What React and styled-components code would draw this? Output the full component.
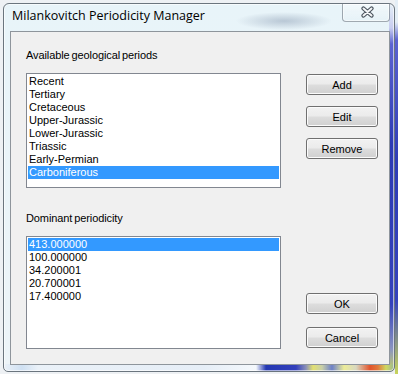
import React from 'react';
import styled, { createGlobalStyle } from 'styled-components';

const GlobalStyle = createGlobalStyle`
  html, body {
    margin: 0;
    padding: 0;
  }
  body {
    font-family: "Liberation Sans", Arial, sans-serif;
  }
`;

const Page = styled.div`
  box-sizing: border-box;
  width: 398px;
  height: 374px;
  padding: 3px 0 0 3px;
  overflow: hidden;
  background:
    linear-gradient(to bottom, #e4eef6 0, #e4eef6 22px, #5a62d0 40px, #2f3db6 160px, #3442bc 300px, #c8d45c 374px) right / 3px 100% no-repeat,
    #eef1f4;
`;

const Window = styled.div`
  box-sizing: border-box;
  width: 392px;
  height: 369px;
  border: 1px solid #6b757e;
  border-radius: 6px 6px 5px 5px;
  padding: 0 4px 6px 6px;
  display: flex;
  flex-direction: column;
  box-shadow: inset 0 0 0 1px rgba(255, 255, 255, 0.6);
  background:
    linear-gradient(to right,
      #eaf1f8 0, #cfe0f2 18px, #eaf1f8 34px, #e6eef7 200px, #f4f8fc 252px,
      #2438b2 262px, #3340bc 292px, #8a90b8 302px, #e2e070 309px, #c8cfa8 318px,
      #6d80c8 328px, #ecec98 340px, #d8d8c0 352px, #e2542c 366px, #e07a3c 374px,
      #cfd860 382px, #8fb0a0 392px) bottom / 100% 7px no-repeat,
    linear-gradient(to bottom,
      #e4eef6 0, #c8cdf0 24px, #5c64d2 40px, #2d3bb5 140px, #3442bc 300px,
      #8a94c0 345px, #c8d45c 369px) right / 5px 100% no-repeat,
    radial-gradient(ellipse 48px 9px at 280px 17px, rgba(96, 116, 146, 0.35), transparent),
    linear-gradient(to bottom, #e8f4f9, #edf4f8);
`;

const TitleBar = styled.div`
  height: 27px;
  display: flex;
  justify-content: space-between;
  align-items: flex-start;
  padding-left: 2px;
`;

const Title = styled.div`
  margin-top: 4px;
  font-family: "Open Sans", "Noto Sans", sans-serif;
  font-size: 12.5px;
  line-height: 16px;
  color: #000;
`;

const CloseButton = styled.div`
  box-sizing: border-box;
  width: 48px;
  height: 18px;
  border: 1px solid rgba(60, 72, 84, 0.45);
  border-top: none;
  border-radius: 0 0 4px 4px;
  background: linear-gradient(to bottom, rgba(255, 255, 255, 0.45), rgba(226, 238, 244, 0.35));
  box-shadow: inset 0 0 0 1px rgba(255, 255, 255, 0.5);
  display: flex;
  align-items: center;
  justify-content: center;
  padding: 0 0 2px 2px;
`;

const Client = styled.div`
  flex: 1;
  box-sizing: border-box;
  border: 1px solid #8e959c;
  background: #f0f0f0;
  display: flex;
  padding: 17px 0 15px 15px;
`;

const LeftCol = styled.div`
  width: 255px;
  display: flex;
  flex-direction: column;
`;

const Label = styled.div`
  font-size: 11px;
  line-height: 13px;
  height: 13px;
  color: #000;
  margin-top: ${(p) => p.$top || 0}px;
  white-space: nowrap;
  word-spacing: -1px;
  letter-spacing: -0.1px;
`;

const ListBox = styled.div`
  box-sizing: border-box;
  height: ${(p) => p.$height}px;
  margin-top: 11px;
  border: 1px solid #828790;
  background: #fff;
  padding: 1px;
`;

const Item = styled.div`
  height: 13px;
  line-height: 13px;
  font-size: 11px;
  padding-left: 1px;
  white-space: nowrap;
  color: ${(p) => (p.$selected ? '#fff' : '#000')};
  background: ${(p) => (p.$selected ? '#3399ff' : 'transparent')};
`;

const RightCol = styled.div`
  width: 72px;
  margin: 25px 0 1px 25px;
  display: flex;
  flex-direction: column;
  justify-content: space-between;
`;

const ButtonGroup = styled.div`
  display: flex;
  flex-direction: column;
  gap: ${(p) => p.$gap}px;
`;

const Button = styled.div`
  box-sizing: border-box;
  height: 21px;
  width: 72px;
  border: 1px solid #707070;
  border-radius: 3px;
  background: linear-gradient(to bottom, #f2f2f2 0%, #ebebeb 48%, #dddddd 52%, #d0d0d0 100%);
  box-shadow: inset 0 0 0 1px #fbfbfb;
  display: flex;
  align-items: center;
  justify-content: center;
  font-size: 11px;
  color: #000;
`;

const periods = [
  'Recent',
  'Tertiary',
  'Cretaceous',
  'Upper-Jurassic',
  'Lower-Jurassic',
  'Triassic',
  'Early-Permian',
  'Carboniferous',
];

const periodicities = ['413.000000', '100.000000', '34.200001', '20.700001', '17.400000'];

const CloseGlyph = () => (
  <svg width="13" height="12" viewBox="0 0 13 12">
    <path d="M2.5 2.5 L10.5 9.5 M10.5 2.5 L2.5 9.5" stroke="#4a535d" strokeWidth="4.2" strokeLinecap="round" fill="none" />
    <path d="M2.5 2.5 L10.5 9.5 M10.5 2.5 L2.5 9.5" stroke="#f4f6f8" strokeWidth="2" strokeLinecap="round" fill="none" />
  </svg>
);

export default function App() {
  return (
    <Page>
      <GlobalStyle />
      <Window>
        <TitleBar>
          <Title>Milankovitch Periodicity Manager</Title>
          <CloseButton>
            <CloseGlyph />
          </CloseButton>
        </TitleBar>
        <Client>
          <LeftCol>
            <Label>Available geological periods</Label>
            <ListBox $height={115}>
              {periods.map((p, i) => (
                <Item key={p} $selected={i === 7}>{p}</Item>
              ))}
            </ListBox>
            <Label $top={24}>Dominant periodicity</Label>
            <ListBox $height={113}>
              {periodicities.map((p, i) => (
                <Item key={p} $selected={i === 0}>{p}</Item>
              ))}
            </ListBox>
          </LeftCol>
          <RightCol>
            <ButtonGroup $gap={11}>
              <Button>Add</Button>
              <Button>Edit</Button>
              <Button>Remove</Button>
            </ButtonGroup>
            <ButtonGroup $gap={13}>
              <Button>OK</Button>
              <Button>Cancel</Button>
            </ButtonGroup>
          </RightCol>
        </Client>
      </Window>
    </Page>
  );
}
